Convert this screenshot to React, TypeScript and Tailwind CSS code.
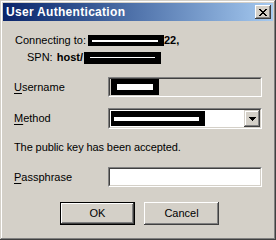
import React from "react";

function Sunken({ className = "", children }: { className?: string; children?: React.ReactNode }) {
  return (
    <div
      className={
        "border-t border-l border-t-[#808080] border-l-[#808080] border-b border-r border-b-white border-r-white " +
        className
      }
    >
      <div className="w-full h-full border-t border-l border-t-[#404040] border-l-[#404040] border-b border-r border-b-[#d4d0c8] border-r-[#d4d0c8] flex items-stretch">
        {children}
      </div>
    </div>
  );
}

function Button({ children, def = false, className = "" }: { children: React.ReactNode; def?: boolean; className?: string }) {
  const inner = (
    <div className="w-full h-full flex items-center justify-center bg-[#d4d0c8] shadow-[inset_-1px_-1px_#404040,inset_1px_1px_#ffffff,inset_-2px_-2px_#808080,inset_2px_2px_#d4d0c8]">
      {children}
    </div>
  );
  return def ? (
    <div className={"border border-black " + className}>{inner}</div>
  ) : (
    <div className={className}>{inner}</div>
  );
}

export default function App() {
  return (
    <div className="w-[276px] h-[240px] bg-[#d4d0c8] p-[3px] flex flex-col text-[11px] leading-[13px] text-black [font-family:'Liberation_Sans',Arial,sans-serif] shadow-[inset_-1px_-1px_#404040,inset_1px_1px_#d4d0c8,inset_-2px_-2px_#808080,inset_2px_2px_#ffffff]">
      {/* Title bar */}
      <div className="h-[18px] flex items-center justify-between bg-gradient-to-r from-[#0a246a] to-[#a6caf0]">
        <span className="pl-[3px] text-white font-bold text-[12px] leading-[14px] tracking-[0.3px]">User Authentication</span>
        <div className="mr-[2px] w-[16px] h-[14px] bg-[#d4d0c8] flex items-center justify-center shadow-[inset_-1px_-1px_#404040,inset_1px_1px_#ffffff,inset_-2px_-2px_#808080,inset_2px_2px_#d4d0c8]">
          <svg width="8" height="7" viewBox="0 0 8 7" shapeRendering="crispEdges">
            <path d="M0 0h2v1h-2z M6 0h2v1h-2z M1 1h2v1h-2z M5 1h2v1h-2z M2 2h4v1h-4z M3 3h2v1h-2z M2 4h4v1h-4z M1 5h2v1h-2z M5 5h2v1h-2z M0 6h2v1h-2z M6 6h2v1h-2z" fill="#000" />
          </svg>
        </div>
      </div>

      {/* Connecting to */}
      <div className="mt-[13px] h-[13px] flex items-center pl-[12px]">
        <span>Connecting to:</span>
        <div className="ml-[2px] w-[76px] h-[11px] bg-black flex items-center pl-[4px]">
          <div className="w-[66px] h-[2px] bg-white" />
        </div>
        <span className="font-bold">22,</span>
      </div>

      {/* SPN */}
      <div className="mt-[4px] h-[13px] flex items-center pl-[24px]">
        <span>SPN:</span>
        <span className="ml-[4px] font-bold">host/</span>
        <div className="ml-[1px] w-[77px] h-[12px] bg-black flex items-center pl-[6px]">
          <div className="w-[65px] h-[1px] bg-white" />
        </div>
      </div>

      {/* Username */}
      <div className="mt-[13px] h-[20px] flex items-center pl-[11px]">
        <span className="w-[94px]">
          <span className="underline underline-offset-2">U</span>sername
        </span>
        <Sunken className="w-[154px] h-[20px] bg-[#d4d0c8]">
          <div className="ml-[1px] w-[48px] bg-black flex items-center pl-[6px]">
            <div className="w-[36px] h-[6px] bg-white" />
          </div>
        </Sunken>
      </div>

      {/* Method */}
      <div className="mt-[11px] h-[21px] flex items-center pl-[11px]">
        <span className="w-[94px]">
          <span className="underline underline-offset-2">M</span>ethod
        </span>
        <Sunken className="w-[154px] h-[21px] bg-white">
          <div className="flex-1 flex items-stretch py-[1px] pl-[1px]">
            <div className="w-[94px] bg-black flex items-center pl-[3px]">
              <div className="w-[85px] h-[4px] bg-white" />
            </div>
          </div>
          <div className="w-[16px] bg-[#d4d0c8] flex items-center justify-center shadow-[inset_-1px_-1px_#404040,inset_1px_1px_#d4d0c8,inset_-2px_-2px_#808080,inset_2px_2px_#ffffff]">
            <svg width="7" height="4" viewBox="0 0 7 4" shapeRendering="crispEdges">
              <path d="M0 0h7v1h-7z M1 1h5v1h-5z M2 2h3v1h-3z M3 3h1v1h-1z" fill="#000" />
            </svg>
          </div>
        </Sunken>
      </div>

      {/* Public key text */}
      <div className="mt-[12px] h-[13px] flex items-center pl-[11px] tracking-[-0.1px]">The public key has been accepted.</div>

      {/* Passphrase */}
      <div className="mt-[13px] h-[20px] flex items-center pl-[11px]">
        <span className="w-[94px]">
          <span className="underline underline-offset-2">P</span>assphrase
        </span>
        <Sunken className="w-[154px] h-[20px] bg-white" />
      </div>

      {/* Buttons */}
      <div className="mt-[15px] flex pl-[57px] gap-[9px]">
        <Button def className="w-[75px] h-[23px]">OK</Button>
        <Button className="w-[75px] h-[23px]">Cancel</Button>
      </div>
    </div>
  );
}
